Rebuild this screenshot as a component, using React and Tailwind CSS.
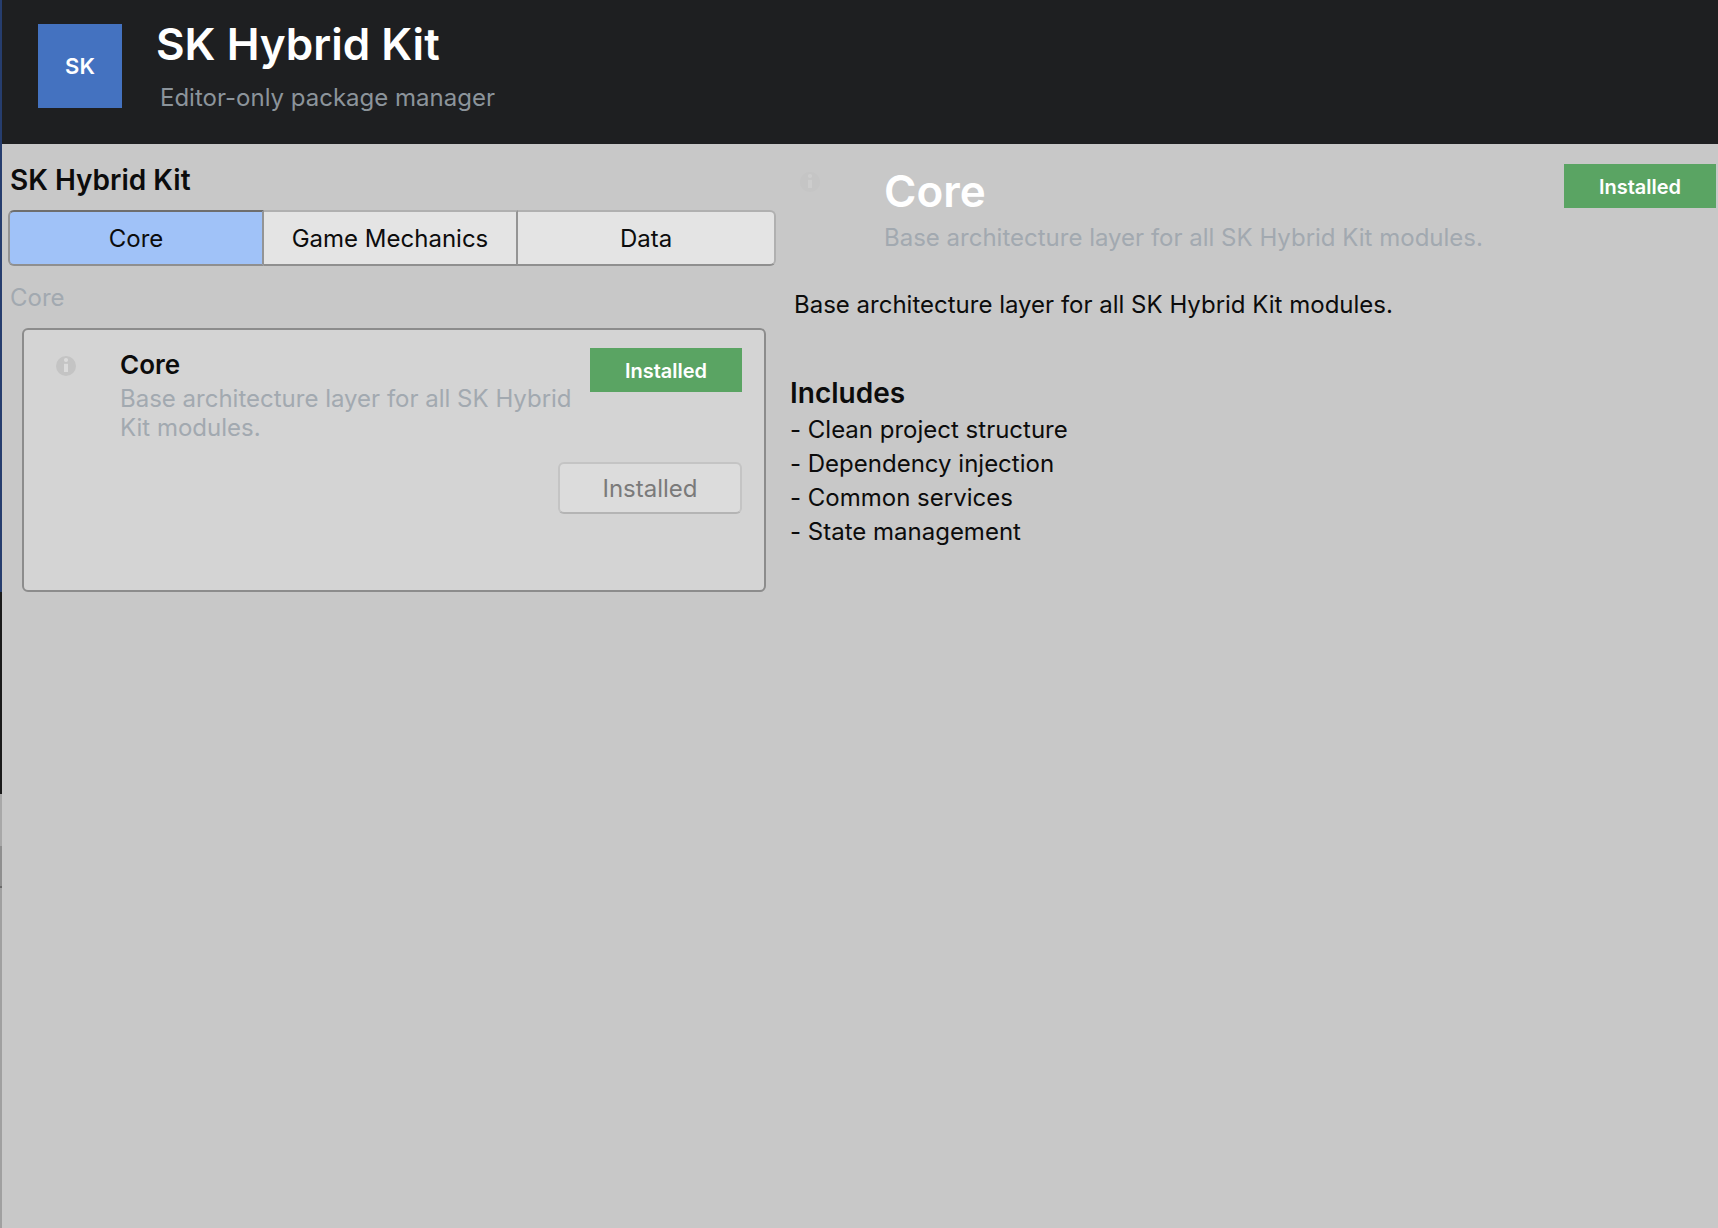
import { useState } from 'react'
import clsx from 'clsx'

const TABS = ['Core', 'Game Mechanics', 'Data']

const MODULE = {
  name: 'Core',
  description: 'Base architecture layer for all SK Hybrid Kit modules.',
  includes: [
    'Clean project structure',
    'Dependency injection',
    'Common services',
    'State management',
  ],
}

function InfoIcon({ className }) {
  return (
    <svg viewBox="0 0 20 20" className={clsx('h-5 w-5 shrink-0', className)} aria-hidden="true">
      <circle cx="10" cy="10" r="10" fill="currentColor" />
      <circle cx="10" cy="4" r="2.1" className="fill-white/40" />
      <rect x="8" y="7.8" width="4" height="8.2" className="fill-white/40" />
    </svg>
  )
}

function Badge({ children }) {
  return (
    <span className="flex h-11 w-38 shrink-0 items-center justify-center bg-[#5aa463] pt-0.5 text-xl font-semibold text-white">
      {children}
    </span>
  )
}

function Header() {
  return (
    <header className="flex items-start gap-[34px] bg-[#1e1f21] pt-4 pb-8 pl-9">
      <div className="mt-2 flex h-21 w-21 items-center justify-center bg-[#4472c0] pt-0.5 text-[22px] font-semibold text-white">
        SK
      </div>
      <div>
        <h1 className="text-[44px] leading-[56px] font-semibold text-white">SK Hybrid Kit</h1>
        <p className="mt-3 pl-1 leading-7 text-[#8c949b]">Editor-only package manager</p>
      </div>
    </header>
  )
}

function Tabs({ active, onChange }) {
  return (
    <div className="grid h-14 grid-cols-[256fr_254fr_258fr]" role="tablist">
      {TABS.map((tab) => (
        <button
          key={tab}
          type="button"
          role="tab"
          aria-selected={tab === active}
          onClick={() => onChange(tab)}
          className={clsx(
            'border-y-2 border-r-2 border-r-[#949494] border-b-[#8f8f8f] pt-0.5 first:rounded-l-md first:border-l-2 first:border-l-[#949494] last:rounded-r-md last:border-r-[#b0b0b0]',
            tab === active ? 'border-t-[#6e6e6e] bg-[#a0c2f8]' : 'border-t-[#b0b0b0] bg-[#e4e4e4]',
          )}
        >
          {tab}
        </button>
      ))}
    </div>
  )
}

function ModuleCard({ module }) {
  return (
    <article className="mt-4 mr-2.5 ml-3.5 rounded-md border-2 border-[#8c8c8c] bg-[#d4d4d4] pt-[18px] pr-[22px] pb-[76px] pl-8">
      <div className="flex items-start">
        <InfoIcon className="mt-2 text-[#c4c4c4]" />
        <div className="ml-11 flex-1">
          <h3 className="text-[26px] leading-[34px] font-semibold">{module.name}</h3>
          <p className="mt-0.5 leading-[29px] text-[#a2a9b0]">{module.description}</p>
        </div>
        <Badge>Installed</Badge>
      </div>
      <button
        type="button"
        disabled
        className="mt-5 ml-auto block h-13 w-46 rounded-md border-2 border-[#c4c4c4] border-b-[#b4b4b4] bg-[#dcdcdc] pt-0.5 text-[#7a7a7a]"
      >
        Installed
      </button>
    </article>
  )
}

function ModuleDetails({ module }) {
  return (
    <section className="pt-5 pr-0.5 pl-3.5">
      <div className="flex items-start">
        <InfoIcon className="mt-2 ml-2.5 text-[#c0c0c0] opacity-35" />
        <div className="ml-16 flex-1">
          <h2 className="text-[44px] leading-[54px] font-semibold text-white">{module.name}</h2>
          <p className="mt-1.5 leading-7 text-[#a2a9b0]">{module.description}</p>
        </div>
        <Badge>Installed</Badge>
      </div>
      <p className="mt-[39px] pl-1 leading-7">{module.description}</p>
      <h3 className="mt-14 text-[28px] leading-9 font-semibold">Includes</h3>
      <ul className="mt-0.5">
        {module.includes.map((item) => (
          <li key={item} className="leading-[34px]">- {item}</li>
        ))}
      </ul>
    </section>
  )
}

// Sliver of the windows behind this one, visible along the left edge
function WindowEdge() {
  return (
    <div className="flex w-0.5 shrink-0 flex-col bg-[#a0a0a0]">
      <div className="h-[592px] bg-[#263d6e]" />
      <div className="h-[202px] bg-[#1a1a1a]" />
      <div className="h-[52px] bg-[#a8a8a8]" />
      <div className="h-10 bg-[#8f8f8f]" />
      <div className="h-0.5 bg-[#6a6a6a]" />
    </div>
  )
}

export default function App() {
  const [tab, setTab] = useState('Core')

  return (
    <div className="flex min-h-screen bg-[#c8c8c8] font-['Inter',sans-serif] text-2xl text-[#0c0c0c] [font-feature-settings:'calt'_0]">
      <WindowEdge />
      <div className="flex-1">
        <Header />
        <main className="grid grid-cols-[774fr_942fr]">
          <section className="pt-[18px] pl-1.5">
            <h2 className="pl-0.5 text-[28px] leading-9 font-semibold">SK Hybrid Kit</h2>
            <div className="mt-3">
              <Tabs active={tab} onChange={setTab} />
            </div>
            <p className="mt-[18px] pl-0.5 leading-7 text-[#a2a9b0]">{tab}</p>
            <ModuleCard module={MODULE} />
          </section>
          <ModuleDetails module={MODULE} />
        </main>
      </div>
    </div>
  )
}
